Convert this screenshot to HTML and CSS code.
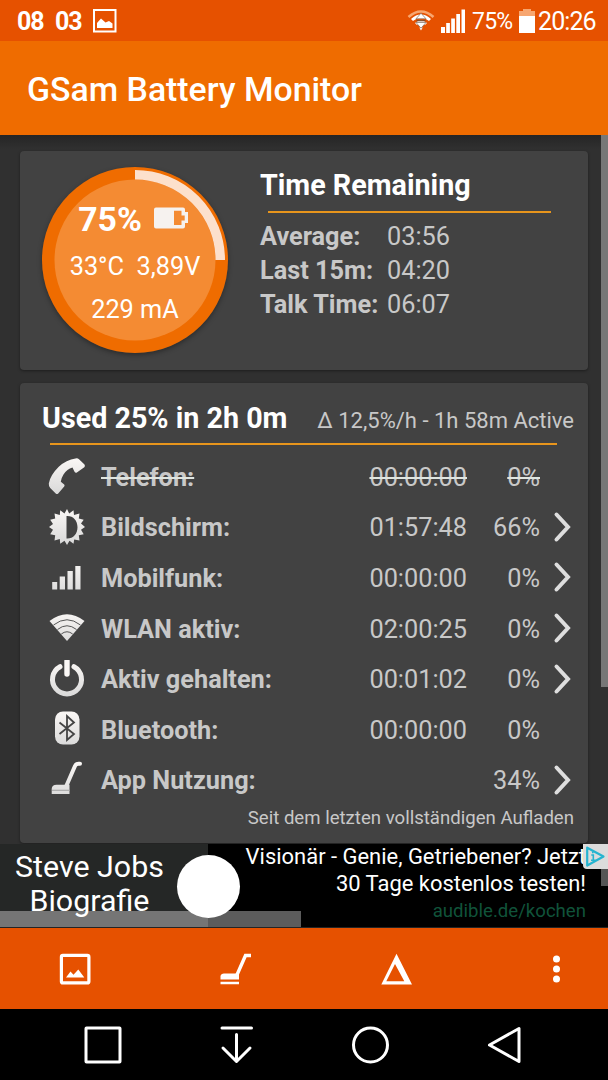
FILE: index.html
```html
<!DOCTYPE html>
<html lang="de">
<head>
    <meta charset="UTF-8">
    <meta name="viewport" content="width=device-width, initial-scale=1.0">
    <title>GSam Battery Monitor</title>
    <link rel="stylesheet" href="styles.css">
</head>
<body>
    <!-- Shared gradient for the list icons -->
    <svg class="defs" width="0" height="0">
        <defs>
            <linearGradient id="silver" x1="0" y1="0" x2="0" y2="38" gradientUnits="userSpaceOnUse">
                <stop offset="0" stop-color="#fbf8f6"/>
                <stop offset="1" stop-color="#d8d8d8"/>
            </linearGradient>
        </defs>
    </svg>

    <div class="status-bar">
        <span class="notice">08</span>
        <span class="notice second">03</span>
        <svg class="picture" width="24" height="24" viewBox="0 0 24 24">
            <rect x="1" y="1" width="21.500" height="21.500" fill="none" stroke="#fff" stroke-width="2"/>
            <path d="M4 19V14L8 9.500L12.500 13.500L16 12L19.500 14.500V19Z" fill="#fff"/>
        </svg>
        <svg class="wifi" width="28" height="24" viewBox="0 0 28 24">
            <path d="M1.500 8Q14 -3 26.500 8" fill="none" stroke="#f7a670" stroke-width="2.600"/>
            <path d="M5 11Q14 3 23 11M9 15Q14 10.500 19 15" fill="none" stroke="#fff" stroke-width="3"/>
            <path d="M12.300 18.500H15.700L14 21.500Z" fill="#fff"/>
            <path d="M14 4.200L19 9.800H9ZM14 19.200L9 13.500H19Z" fill="#fff" stroke="#7d6a5c" stroke-width="0.700"/>
            <path d="M9.500 11.700H18.500" stroke="#7d4a28" stroke-width="1.200"/>
        </svg>
        <svg class="signal" width="24" height="24" viewBox="0 0 24 24">
            <path d="M0 18h4v6H0zM5.200 14h3.700v10H5.200zM10.200 9.500h3.700V24h-3.700zM15.300 5H19v19h-3.700zM20.500 0.500H24V24h-3.500z" fill="#fff"/>
        </svg>
        <span class="percent">75%</span>
        <svg class="battery" width="16" height="24" viewBox="0 0 16 24">
            <path d="M4 0h8v2h4v5H0V2h4z" fill="#f7a670"/>
            <path d="M0 7h16v17H0z" fill="#fff"/>
        </svg>
        <span class="clock">20:26</span>
    </div>

    <header class="title-bar">
        <h1>GSam Battery Monitor</h1>
    </header>

    <main class="content">
        <div class="scrollbar"></div>

        <section class="card summary">
            <div class="gauge">
                <svg class="ring" width="186" height="186" viewBox="0 0 186 186">
                    <circle cx="93" cy="93" r="93" fill="#ef6c00"/>
                    <circle cx="93" cy="93" r="80.500" fill="#f48b33"/>
                    <path d="M93 7.750A85.250 85.250 0 0 1 178.250 93" fill="none" stroke="#fce0cc" stroke-width="9.500"/>
                </svg>
                <div class="gauge-text">
                    <div class="level">
                        <span>75%</span>
                        <svg width="34" height="22" viewBox="0 0 34 22">
                            <path d="M2 0.500H29Q31 0.500 31 2.500V5H34V16H31V19.500Q31 21.500 29 21.500H2Q0 21.500 0 19.500V2.500Q0 0.500 2 0.500ZM20 3.700V18H27.500V13.500H30.700V8.500H27.500V3.700Z" fill="#f6f2ef" fill-rule="evenodd"/>
                            <path d="M21.500 5H26V9.500H29.500V12.500H26V16.700H20V12.500H22.800V8.800H20V5Z" fill="#f48b33"/>
                        </svg>
                    </div>
                    <div class="reading">33°C&nbsp; 3,89V</div>
                    <div class="reading">229 mA</div>
                </div>
            </div>
            <div class="remaining">
                <h2>Time Remaining</h2>
                <hr>
                <dl>
                    <dt>Average:</dt><dd>03:56</dd>
                    <dt>Last 15m:</dt><dd>04:20</dd>
                    <dt>Talk Time:</dt><dd>06:07</dd>
                </dl>
            </div>
        </section>

        <section class="card usage">
            <div class="usage-head">
                <h2>Used 25% in 2h 0m</h2>
                <span>Δ 12,5%/h - 1h 58m Active</span>
            </div>
            <hr>
            <div class="row off">
                <svg class="icon" viewBox="0 0 38 38">
                    <path d="M27.500 1.500Q29.500 0.800 31 2.300L36.500 7.500Q37.500 9 36.300 10.200L28.500 15.800Q27 16 26.400 14.500L24.500 10.500Q19 12 15.500 17.500Q13 21.500 12.800 24.800L16.200 27.500Q17 28.500 16.200 29.600L10 36.800Q8.800 37.500 7.700 36.500L2.200 31Q0.600 29.400 0.800 26.500Q2 18.500 10.500 10Q18.500 2.500 27.500 1.500Z" fill="url(#silver)"/>
                </svg>
                <b>Telefon:</b><span>00:00:00</span><span>0%</span>
            </div>
            <div class="row">
                <svg class="icon" viewBox="0 0 38 38">
                    <path fill="url(#silver)" fill-rule="evenodd" d="M19 1L21.200 5.500L25.500 2.200L26 7L31.500 5.500L30.800 10.500L35.700 11.800L33 15.500L37 19L33 21.700L35.700 26.200L30.800 27.300L31.500 32.500L26.200 31.500L25.500 35.800L21.500 32.800L19 37L16.500 32.800L12.200 35.800L11.800 31L6.500 32.500L7.200 27.300L2.200 26.200L5 21.700L1 19L5 16L2.200 11.800L7.200 10.500L6.500 5.500L11.800 7L12.200 2.200L16.500 5.500ZM18.500 8V30.500C25 31 29.500 26 29.500 19.200C29.500 12.500 25 7.500 18.500 8Z"/>
                </svg>
                <b>Bildschirm:</b><span>01:57:48</span><span>66%</span>
                <svg class="arrow" viewBox="0 0 18 32"><path d="M3.500 3.500L15 16L3.500 28.500"/></svg>
            </div>
            <div class="row">
                <svg class="icon" viewBox="0 0 38 38">
                    <path d="M4.200 24h5v7.500h-5zM11.700 18.500H17v13h-5.300zM19.500 13h5.300v18.500h-5.300zM27.300 8h5.200v23.500h-5.200z" fill="url(#silver)"/>
                </svg>
                <b>Mobilfunk:</b><span>00:00:00</span><span>0%</span>
                <svg class="arrow" viewBox="0 0 18 32"><path d="M3.500 3.500L15 16L3.500 28.500"/></svg>
            </div>
            <div class="row">
                <svg class="icon" viewBox="0 0 38 38">
                    <path d="M1.500 12Q19 -1.500 36.500 12L19 32Z" fill="url(#silver)"/>
                    <path d="M5.500 16Q19 5.500 32.500 16M9.500 20.500Q19 13 28.500 20.500M13.300 25Q19 20.500 24.700 25" fill="none" stroke="#555" stroke-width="1"/>
                </svg>
                <b>WLAN aktiv:</b><span>02:00:25</span><span>0%</span>
                <svg class="arrow" viewBox="0 0 18 32"><path d="M3.500 3.500L15 16L3.500 28.500"/></svg>
            </div>
            <div class="row">
                <svg class="icon" viewBox="0 0 38 38">
                    <path d="M12 6.700A14.500 14.500 0 1 0 26 6.700" fill="none" stroke="url(#silver)" stroke-width="5" stroke-linecap="round"/>
                    <path d="M19 1V14" stroke="#fbf8f6" stroke-width="5.400" stroke-linecap="round"/>
                </svg>
                <b>Aktiv gehalten:</b><span>00:01:02</span><span>0%</span>
                <svg class="arrow" viewBox="0 0 18 32"><path d="M3.500 3.500L15 16L3.500 28.500"/></svg>
            </div>
            <div class="row">
                <svg class="icon" viewBox="0 0 38 38">
                    <rect x="7" y="1.500" width="24.500" height="33" rx="8" fill="url(#silver)"/>
                    <path d="M11.500 12.500L26 24L19 30V6L26 12.500L11.500 24" fill="none" stroke="#444" stroke-width="1.800"/>
                </svg>
                <b>Bluetooth:</b><span>00:00:00</span><span>0%</span>
            </div>
            <div class="row">
                <svg class="icon" viewBox="0 0 38 38">
                    <path d="M18.500 24.500L27 5Q28 2.800 30.500 2.800H32" fill="none" stroke="url(#silver)" stroke-width="4" stroke-linecap="round"/>
                    <path d="M3.700 28Q4 23.800 8.500 23.800H21.500V33H3.700Z" fill="url(#silver)"/>
                    <path d="M4 29.300H21.500" stroke="#aaa" stroke-width="1.200"/>
                </svg>
                <b>App Nutzung:</b><span></span><span>34%</span>
                <svg class="arrow" viewBox="0 0 18 32"><path d="M3.500 3.500L15 16L3.500 28.500"/></svg>
            </div>
            <p class="since">Seit dem letzten vollständigen Aufladen</p>
        </section>
    </main>

    <aside class="ad">
        <div class="strip"></div>
        <div class="ad-title">Steve Jobs<br>Biografie</div>
        <div class="ad-text">
            <div>Visionär - Genie, Getriebener? Jetzt</div>
            <div>30 Tage kostenlos testen!</div>
            <div class="ad-link">audible.de/kochen</div>
        </div>
        <div class="dot"></div>
        <div class="ad-edge"></div>
        <svg class="ad-choice" width="25" height="25" viewBox="0 0 25 25">
            <path d="M0 0H25V25H4Q0 25 0 21Z" fill="#dcdcdc"/>
            <path d="M4.200 3.700L20.500 12.500L4.200 21.500Z" fill="none" stroke="#25b4d0" stroke-width="2.200" stroke-linejoin="round"/>
            <path d="M9.800 7.500V9.300M8.300 11H10.300V16M8 16.200H12.500" fill="none" stroke="#25b4d0" stroke-width="1.600"/>
        </svg>
    </aside>

    <div class="toolbar">
        <svg width="32" height="32" viewBox="0 0 32 32">
            <rect x="2.400" y="2.400" width="27.500" height="27.500" rx="1.500" fill="none" stroke="#fff" stroke-width="3.200"/>
            <path d="M7 24.500L11.500 18.500L14.500 21.800L19.300 16.500L25.300 24.500Z" fill="#fff"/>
        </svg>
        <svg width="32" height="32" viewBox="0 0 32 32">
            <path d="M17.700 22.500L26.500 2.500H32" fill="none" stroke="#fff" stroke-width="3.400"/>
            <path d="M1.500 26.500V23Q2 20.500 5 20.500H20V26.500ZM1.500 28.700H20V31.300H1.500Z" fill="#fff"/>
        </svg>
        <svg width="32" height="32" viewBox="0 0 32 32">
            <path d="M16.500 0.800L32 31.500H1.300ZM15 11L6.300 28.200H24.300Z" fill="#fff" fill-rule="evenodd"/>
        </svg>
        <svg width="32" height="32" viewBox="0 0 32 32">
            <g fill="#fff">
                <circle cx="16.500" cy="6" r="3.500"/>
                <circle cx="16.500" cy="16" r="3.500"/>
                <circle cx="16.500" cy="26" r="3.500"/>
            </g>
        </svg>
    </div>

    <nav class="nav-bar">
        <svg viewBox="0 0 40 40"><rect x="3" y="3" width="34" height="34" rx="0.500"/></svg>
        <svg viewBox="0 0 40 40"><path d="M5 3H34.500M19.500 9.500V36M6 23L19.500 36.500L33 23"/></svg>
        <svg viewBox="0 0 40 40"><circle cx="19.500" cy="20" r="17"/></svg>
        <svg viewBox="0 0 40 40"><path d="M34 3.500V36.500L4.500 20Z"/></svg>
    </nav>
</body>
</html>
```
FILE: styles.css
```css
/* Page */
* {
    box-sizing: border-box;
}

body {
    font-family: Roboto, sans-serif;
    background-color: #303030;
    color: #c8c8c8;
    margin: 0;
    width: 608px;
    height: 1080px;
    display: flex;
    flex-direction: column;
    overflow: hidden;
}

h1, h2, p, dl, dd {
    margin: 0;
}

svg {
    display: block;
    flex: none;
}

.defs {
    position: absolute;
}

/* Status bar */
.status-bar {
    height: 41px;
    flex: none;
    background-color: #e65100;
    color: #fff;
    display: flex;
    align-items: center;
    padding: 0 12px 0 17px;
    white-space: nowrap;
}

.notice {
    font-size: 25px;
    font-weight: 700;
    letter-spacing: -1.2px;
    width: 26px;
    padding-top: 1px;
}

.second {
    margin-left: 12px;
}

.picture {
    margin-left: 12px;
}

.wifi {
    margin-left: auto;
}

.signal {
    margin-left: 6px;
}

.percent {
    font-size: 23px;
    letter-spacing: -0.8px;
    width: 41px;
    margin-left: 7px;
    padding-top: 1px;
}

.battery {
    margin-left: 6px;
}

.clock {
    font-size: 25px;
    letter-spacing: -0.9px;
    width: 58px;
    margin-left: 3px;
    padding-top: 1px;
}

/* Title */
.title-bar {
    height: 94px;
    flex: none;
    background-color: #ef6c00;
    display: flex;
    align-items: center;
    padding: 3px 27px 0;
}

h1 {
    color: #fff;
    font-size: 33.8px;
    font-weight: 500;
}

/* Cards */
.content {
    position: relative;
    height: 709px;
    flex: none;
    padding: 16px 20px 0;
    background: linear-gradient(#252525, #303030 14px);
}

.scrollbar {
    position: absolute;
    top: 0;
    right: 0;
    width: 7px;
    height: 552px;
    background-color: #777;
}

.card {
    background-color: #424242;
    border-radius: 4px;
    box-shadow: 0 1px 3px rgba(0, 0, 0, 0.4);
}

h2 {
    color: #fff;
    font-size: 28.7px;
    line-height: 34px;
    font-weight: 700;
}

hr {
    border: none;
    height: 2px;
    margin: 0;
    background-color: #e8951c;
}

.summary {
    height: 219px;
    display: flex;
    padding: 16px 22px;
}

.gauge {
    display: grid;
    width: 186px;
    height: 186px;
    border-radius: 50%;
    box-shadow: 0 2px 5px rgba(0, 0, 0, 0.35);
}

.ring, .gauge-text {
    grid-area: 1 / 1;
}

.gauge-text {
    color: #fff;
    text-align: center;
    padding-top: 32px;
}

.level {
    display: flex;
    justify-content: center;
    align-items: center;
    gap: 12px;
    height: 41px;
    padding-right: 4px;
    font-size: 33.75px;
    font-weight: 700;
}

.level svg {
    margin-bottom: 3px;
}

.reading {
    font-size: 25.3px;
    line-height: 42.5px;
    height: 42.5px;
    padding-top: 6px;
}

.remaining {
    margin-left: 32px;
    padding-top: 1px;
    flex: 1;
}

.remaining hr {
    width: 283px;
    margin: 9px 0 7px 8px;
}

dl {
    display: grid;
    grid-template-columns: 127px auto;
    font-size: 25.3px;
    line-height: 34px;
}

dt {
    font-weight: 700;
    white-space: nowrap;
}

/* Usage list */
.usage {
    height: 460px;
    margin-top: 13px;
    padding: 18px 14px 0 22px;
}

.usage-head {
    display: flex;
    justify-content: space-between;
    align-items: baseline;
    white-space: nowrap;
    font-size: 22px;
    height: 42px;
}

.usage hr {
    width: 507px;
    margin: 0 0 7px 8px;
}

.row {
    display: grid;
    grid-template-columns: 38px 1fr 110px 73px 34px;
    align-items: center;
    height: 50.6px;
    padding-left: 6px;
    font-size: 25.3px;
}

.row b {
    padding-left: 15px;
}

.row span {
    text-align: right;
}

.off b, .off span {
    text-decoration: line-through;
    text-decoration-color: #e0e5e0;
    text-decoration-thickness: 2px;
}

.off b {
    justify-self: start;
}

.icon {
    width: 38px;
    height: 38px;
    margin-top: -2px;
}

.arrow {
    width: 18px;
    height: 32px;
    margin-left: 13px;
    margin-top: -2px;
    fill: none;
    stroke: #dedede;
    stroke-width: 4;
    stroke-linecap: round;
}

.since {
    font-size: 18.6px;
    line-height: 24px;
    text-align: right;
}

/* Ad banner */
.ad {
    position: relative;
    height: 84px;
    flex: none;
    display: flex;
    background: linear-gradient(90deg, #252726 208px, #000 208px);
    border-bottom: 1px solid #242424;
    color: #fff;
}

.strip {
    position: absolute;
    left: 0;
    bottom: 0;
    width: 301px;
    height: 16px;
    background: linear-gradient(90deg, #757575 208px, #5c5c5c 208px);
}

.ad-title {
    position: relative;
    width: 179px;
    font-size: 30.4px;
    line-height: 34px;
    padding-top: 6px;
    text-align: center;
}

.ad-text {
    flex: 1;
    font-size: 21.95px;
    line-height: 27px;
    margin-top: -1px;
    text-align: right;
    white-space: nowrap;
    padding-right: 22px;
}

.ad-link {
    font-size: 18.6px;
    line-height: 29px;
    color: #10533a;
}

.dot {
    position: absolute;
    left: 177px;
    top: 11px;
    width: 63px;
    height: 63px;
    border-radius: 50%;
    background-color: #fff;
}

.ad-edge {
    position: absolute;
    right: 0;
    top: 25px;
    width: 7px;
    height: 17px;
    background-color: #555;
}

.ad-choice {
    position: absolute;
    right: 0;
    top: 0;
}

/* Bottom bars */
.toolbar {
    height: 81px;
    flex: none;
    background-color: #e65100;
    display: flex;
    justify-content: space-between;
    align-items: center;
    padding: 0 36px 0 59px;
}

.nav-bar {
    height: 71px;
    flex: none;
    background-color: #000;
    display: flex;
    align-items: center;
    justify-content: space-between;
    padding: 0 83px;
}

.nav-bar svg {
    width: 40px;
    height: 40px;
    fill: none;
    stroke: #fff;
    stroke-width: 3;
    stroke-linecap: round;
    stroke-linejoin: round;
}
```
